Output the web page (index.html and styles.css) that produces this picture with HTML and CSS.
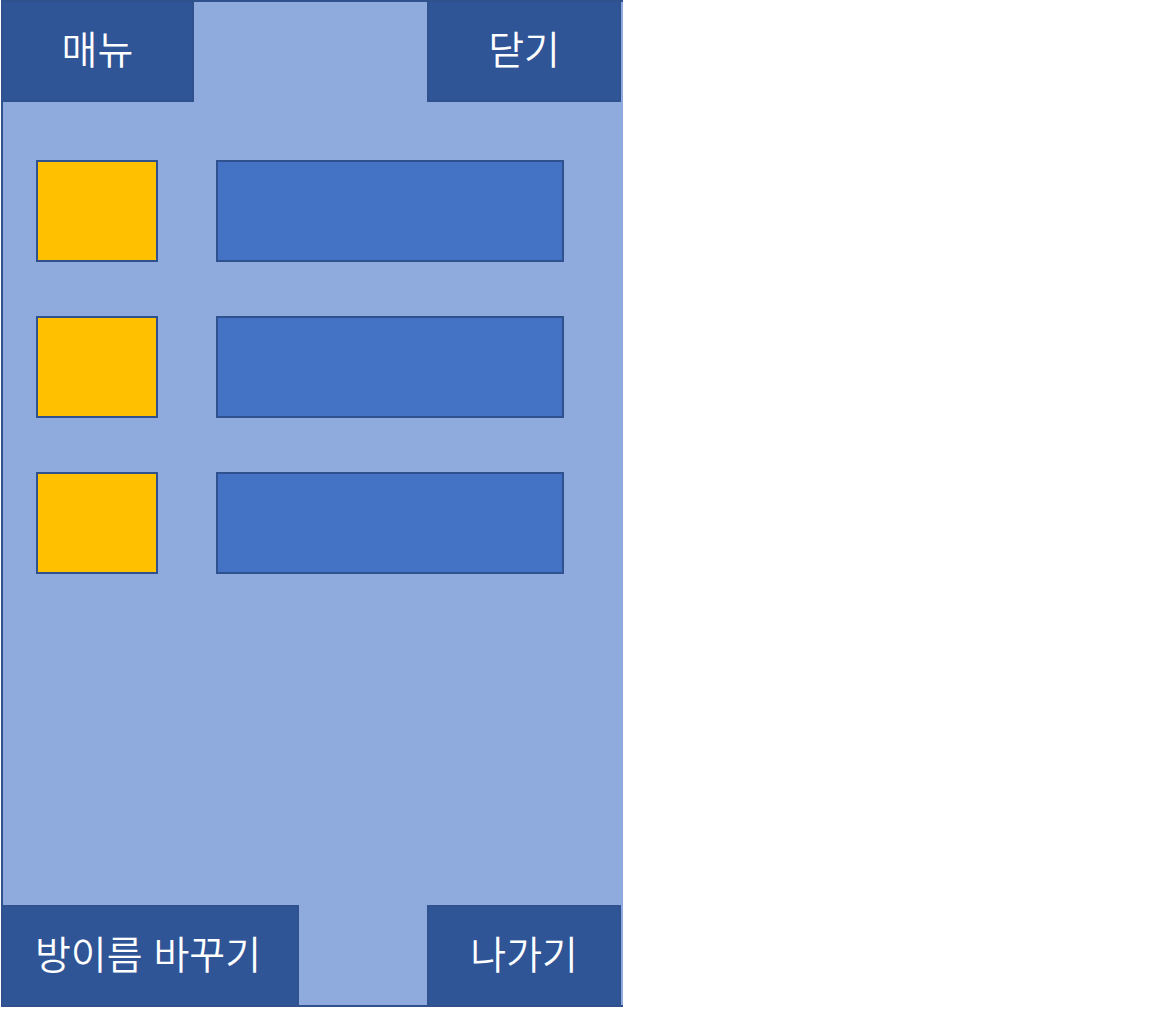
FILE: index.html
```html
<!DOCTYPE html>
<html lang="ko">
<head>
<meta charset="utf-8">
<meta name="viewport" content="width=device-width, initial-scale=1">
<title>매뉴</title>
<link rel="stylesheet" href="styles.css">
</head>
<body>
<main class="panel">
  <header class="bar">
    <h1 class="tile title">매뉴</h1>
    <button class="tile" type="button">닫기</button>
  </header>
  <ul class="list">
    <li class="row"><span class="thumb"></span><span class="field"></span></li>
    <li class="row"><span class="thumb"></span><span class="field"></span></li>
    <li class="row"><span class="thumb"></span><span class="field"></span></li>
  </ul>
  <footer class="bar bottom">
    <button class="tile wide" type="button">방이름 바꾸기</button>
    <button class="tile" type="button">나가기</button>
  </footer>
</main>
</body>
</html>
```
FILE: styles.css
```css
* {
  box-sizing: border-box;
}

body {
  margin: 0;
  background: #fff;
  font-family: "Noto Sans CJK KR", sans-serif;
}

.panel {
  display: flex;
  flex-direction: column;
  width: 54%;
  min-height: calc(100vh - 2px);
  margin-left: 1px;
  border: 2px solid #2f528f;
  border-right: 0;
  background: #8faadc;
}

.bar {
  display: flex;
  justify-content: space-between;
  padding-right: 2px;
}

.tile {
  width: 194px;
  height: 100px;
  margin: 0;
  padding: 0 0 8px;
  border: 2px solid #2f528f;
  border-top: 0;
  background: #2f5597;
  color: #fff;
  font-family: inherit;
  font-size: 39px;
  font-weight: 350;
  line-height: 90px;
  text-align: center;
}

.title {
  width: 191px;
  border-left: 0;
}

.bottom .tile {
  border-top: 2px solid #2f528f;
  border-bottom: 0;
}

.bottom .wide {
  width: 296px;
  padding-right: 4px;
  border-left: 0;
}

.list {
  display: flex;
  flex: 1;
  flex-direction: column;
  gap: 54px;
  margin: 0;
  padding: 58px 59px 58px 33px;
  list-style: none;
}

.row {
  display: flex;
  gap: 58px;
  height: 102px;
}

.thumb,
.field {
  border: 2px solid #2f528f;
}

.thumb {
  width: 122px;
  background: #ffc000;
}

.field {
  flex: 1;
  background: #4472c4;
}
```
